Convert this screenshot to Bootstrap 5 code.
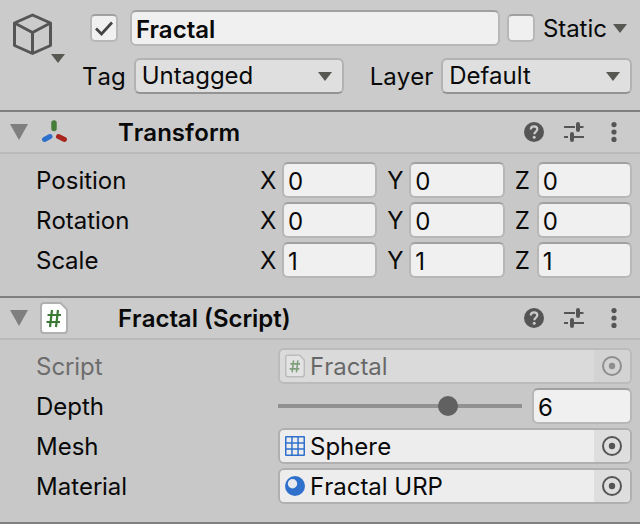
<!DOCTYPE html>
<html lang="en">
<head>
<meta charset="utf-8">
<meta name="viewport" content="width=device-width, initial-scale=1">
<title>Inspector</title>
<link href="https://cdn.jsdelivr.net/npm/bootstrap@5.3.0/dist/css/bootstrap.min.css" rel="stylesheet">
<style>
body { background: #c8c8c8; color: #090909; font-family: Inter, "Liberation Sans", sans-serif; font-size: 24px; line-height: 32px; font-kerning: none; }
.bare { border: 0; background: none; padding: 0; color: #555; }
.caret { width: 14px; height: 9px; fill: #585852; }

/* Object header */
.object-head, .component-head { background: #cbcbcb; }
.object-head { padding: 10px 8px 16px 12px; }
.object-icon { width: 78px; }
.object-icon .caret { margin: 0 0 -3px -2px; }
.head-main { min-width: 0; }
.line-row { height: 36px; }
.line-row label { padding-top: 2px; }
.object-name { width: auto; margin: 0 7px 0 12px; }
.static-name { margin: 0 6px 0 8px; }
.static-menu { margin-right: 5px; }
.tag-row { margin-top: 12px; margin-left: -8px; gap: 8px; }
.tag-pick { flex: 17 1 0; min-width: 0; margin-right: 18px; }
.layer-pick { flex: 15 1 0; min-width: 0; }

/* Controls */
.field { min-width: 0; height: 36px; padding: 2px 4px 0; color: #090909; background: #f0f0f0; border: 2px solid #b7b7b7; border-top-color: #a0a0a0; border-radius: 6px; font-size: 24px; line-height: 30px; }
.field:focus { background: #f0f0f0; box-shadow: none; border-color: #3a79bb; }
.pick { height: 36px; padding: 0 36px 0 6px; color: #090909; border: 2px solid #b2b2b2; border-bottom-color: #939393; border-radius: 6px; font-size: 24px; line-height: 32px;
  background: #dfdfdf url("data:image/svg+xml,%3Csvg xmlns='http://www.w3.org/2000/svg' viewBox='0 0 14 9' preserveAspectRatio='none'%3E%3Cpath d='M0 0h14L7 9z' fill='%23585852'/%3E%3C/svg%3E") no-repeat right 10px center / 14px 9px; }
.tick { width: 28px; height: 28px; margin: 0; border: 2px solid #b7b7b7; border-top-color: #a0a0a0; background-color: #f0f0f0; }
.tick.form-check-input[type=checkbox] { border-radius: 5px; }
.tick:checked { background-color: #f0f0f0; border-color: #a0a0a0 #b7b7b7 #b7b7b7; }
.tick:checked[type=checkbox] { background-size: 24px 24px; background-image: url("data:image/svg+xml,%3Csvg xmlns='http://www.w3.org/2000/svg' viewBox='0 0 24 24'%3E%3Cpath d='M4 12.5l5.500 5.500L20 6.500' fill='none' stroke='%23444' stroke-width='2.700'/%3E%3C/svg%3E"); }

/* Components */
.component { border-top: 2px solid #7f7f7f; }
.component-head { height: 42px; padding: 0 16px 0 10px; border-bottom: 2px solid #bababa; }
.component-head h2 { font-size: 24px; line-height: 32px; padding-top: 2px; }
.component-icon { width: 78px; margin-left: 12px; }
.component-body { padding: 8px 8px 18px 36px; }
.component-body > * + * { margin-top: 4px; }
.tools { gap: 20px; }
.axes { gap: 10px; }
.axis { display: flex; align-items: center; flex: 1 1 0; min-width: 0; }
.axis-name { flex: none; width: 22px; padding-top: 2px; }
.vector-name { width: 224px; padding-top: 2px; }
.prop-name { width: 242px; padding-top: 2px; }
.slot { height: 36px; background: #ededed; border: 2px solid #b0b0b0; border-radius: 6px; }
.slot-value { padding-left: 5px; gap: 5px; }
.slot-text { padding-top: 2px; }
.slot button { width: 36px; background: #dedede; }
.is-off .prop-name { color: #6d6d6d; }
.is-off .slot { opacity: .5; }
.depth { appearance: none; min-width: 0; height: 36px; margin: 0 10px 0 0; background: linear-gradient(#919191, #919191) no-repeat center / 100% 4px; }
.depth::-webkit-slider-thumb { appearance: none; width: 20px; height: 20px; border-radius: 50%; background: #616161; }
.depth::-moz-range-thumb { width: 20px; height: 20px; border: 0; border-radius: 50%; background: #616161; }
.depth-value { width: 100px; }
.end-line { border-top: 2px solid #7f7f7f; }
</style>
<script src="https://cdn.jsdelivr.net/npm/bootstrap@5.3.0/dist/js/bootstrap.bundle.min.js"></script>
</head>
<body>
<svg class="d-none" aria-hidden="true">
  <symbol id="help" viewBox="0 0 20 20"><circle cx="10" cy="10" r="10" fill="#555"/><path d="M6.800 7.600C6.800 5.500 8.100 4.300 10 4.300s3.300 1.100 3.300 2.900c0 2.300-3 2.500-3 5" fill="none" stroke="#cbcbcb" stroke-width="2.200"/><circle cx="10.200" cy="15.200" r="1.500" fill="#cbcbcb"/></symbol>
  <symbol id="preset" viewBox="0 0 20 20"><path d="M0 5h11M16 5h3.500M0 15h4M9 15h11" stroke="#555" stroke-width="2"/><path d="M14 2v6M8 12v6" stroke="#555" stroke-width="4" stroke-linecap="round"/></symbol>
  <symbol id="dots" viewBox="0 0 20 20"><g fill="#555"><circle cx="10" cy="2.600" r="2.600"/><circle cx="10" cy="10" r="2.600"/><circle cx="10" cy="17.400" r="2.600"/></g></symbol>
  <symbol id="fold" viewBox="0 0 18 16"><path d="M0 0h18L9 16z" fill="#7f7f7f"/></symbol>
  <symbol id="sheet" viewBox="0 0 28 32"><path d="M4 1h16.500L27 7.500V28a3 3 0 0 1-3 3H4a3 3 0 0 1-3-3V4a3 3 0 0 1 3-3z" fill="#fff" stroke="#b0b0b0" stroke-width="2"/><path d="M12 8l-2 17M18 8l-2 17M7.500 13h13.500M6.500 20H20" stroke="#3b7a35" stroke-width="2.200" fill="none"/></symbol>
  <symbol id="target" viewBox="0 0 20 20"><circle cx="10" cy="10" r="9" fill="none" stroke="#555" stroke-width="2"/><circle cx="10" cy="10" r="3.200" fill="#555"/></symbol>
</svg>

<header class="object-head d-flex">
  <div class="object-icon flex-shrink-0">
    <button class="bare d-flex align-items-end" aria-label="Object icon">
      <svg class="flex-shrink-0" width="41" height="50" viewBox="0 0 41 50" fill="none" stroke="#555" stroke-width="3" stroke-linejoin="round"><path d="M20.500 5L38.500 13v22.500L20.500 43.500 2.500 35.500V13zM2.500 13l18 9.500 18-9.500M20.500 22.500v21"/></svg>
      <svg class="caret" viewBox="0 0 14 9"><path d="M0 0h14L7 9z"/></svg>
    </button>
  </div>
  <div class="head-main flex-grow-1">
    <div class="line-row d-flex align-items-center">
      <input class="form-check-input tick flex-shrink-0" type="checkbox" checked aria-label="Active">
      <input class="form-control field fw-semibold flex-grow-1 object-name" type="text" value="Fractal" aria-label="Name">
      <input class="form-check-input tick flex-shrink-0" type="checkbox" id="static">
      <label for="static" class="static-name">Static</label>
      <button class="bare d-flex static-menu" aria-label="Static options"><svg class="caret" viewBox="0 0 14 9"><path d="M0 0h14L7 9z"/></svg></button>
    </div>
    <div class="line-row tag-row d-flex align-items-center">
      <label for="tag">Tag</label>
      <select class="form-select pick tag-pick" id="tag"><option>Untagged</option></select>
      <label for="layer">Layer</label>
      <select class="form-select pick layer-pick" id="layer"><option>Default</option></select>
    </div>
  </div>
</header>

<section class="component">
  <div class="component-head d-flex align-items-center">
    <button class="bare d-flex" aria-label="Collapse Transform"><svg width="18" height="16"><use href="#fold"/></svg></button>
    <span class="component-icon"><svg class="d-block" width="30" height="26" viewBox="0 0 30 26" fill="none" stroke-linecap="round" stroke-width="5"><path d="M14 4v5.500" stroke="#477d3b" stroke-width="5.500"/><path d="M4.500 20.500L10 17.500" stroke="#2f70cc"/><path d="M18.500 17.500l6 3" stroke="#a8261e"/></svg></span>
    <h2 class="fw-semibold mb-0 flex-grow-1">Transform</h2>
    <div class="d-flex tools">
      <button class="bare d-flex" aria-label="Help"><svg width="20" height="20"><use href="#help"/></svg></button>
      <button class="bare d-flex" aria-label="Presets"><svg width="20" height="20"><use href="#preset"/></svg></button>
      <button class="bare d-flex" aria-label="More"><svg width="20" height="20"><use href="#dots"/></svg></button>
    </div>
  </div>
  <div class="component-body">
    <div class="d-flex align-items-center">
      <span class="vector-name flex-shrink-0">Position</span>
      <div class="d-flex flex-grow-1 axes">
        <label class="axis"><span class="axis-name">X</span><input class="form-control field" value="0"></label>
        <label class="axis"><span class="axis-name">Y</span><input class="form-control field" value="0"></label>
        <label class="axis"><span class="axis-name">Z</span><input class="form-control field" value="0"></label>
      </div>
    </div>
    <div class="d-flex align-items-center">
      <span class="vector-name flex-shrink-0">Rotation</span>
      <div class="d-flex flex-grow-1 axes">
        <label class="axis"><span class="axis-name">X</span><input class="form-control field" value="0"></label>
        <label class="axis"><span class="axis-name">Y</span><input class="form-control field" value="0"></label>
        <label class="axis"><span class="axis-name">Z</span><input class="form-control field" value="0"></label>
      </div>
    </div>
    <div class="d-flex align-items-center">
      <span class="vector-name flex-shrink-0">Scale</span>
      <div class="d-flex flex-grow-1 axes">
        <label class="axis"><span class="axis-name">X</span><input class="form-control field" value="1"></label>
        <label class="axis"><span class="axis-name">Y</span><input class="form-control field" value="1"></label>
        <label class="axis"><span class="axis-name">Z</span><input class="form-control field" value="1"></label>
      </div>
    </div>
  </div>
</section>

<section class="component">
  <div class="component-head d-flex align-items-center">
    <button class="bare d-flex" aria-label="Collapse Fractal"><svg width="18" height="16"><use href="#fold"/></svg></button>
    <span class="component-icon"><svg class="d-block" width="28" height="32"><use href="#sheet"/></svg></span>
    <h2 class="fw-semibold mb-0 flex-grow-1">Fractal (Script)</h2>
    <div class="d-flex tools">
      <button class="bare d-flex" aria-label="Help"><svg width="20" height="20"><use href="#help"/></svg></button>
      <button class="bare d-flex" aria-label="Presets"><svg width="20" height="20"><use href="#preset"/></svg></button>
      <button class="bare d-flex" aria-label="More"><svg width="20" height="20"><use href="#dots"/></svg></button>
    </div>
  </div>
  <div class="component-body">
    <div class="d-flex align-items-center is-off">
      <span class="prop-name flex-shrink-0">Script</span>
      <div class="slot d-flex flex-grow-1 overflow-hidden">
        <span class="slot-value d-flex align-items-center flex-grow-1"><svg width="20" height="24"><use href="#sheet"/></svg><span class="slot-text">Fractal</span></span>
        <button class="bare d-flex align-items-center justify-content-center" disabled aria-label="Choose script"><svg width="20" height="20"><use href="#target"/></svg></button>
      </div>
    </div>
    <div class="d-flex align-items-center">
      <label class="prop-name flex-shrink-0" for="depth">Depth</label>
      <input class="depth flex-grow-1" type="range" id="depth" min="1" max="8" value="6">
      <input class="form-control field depth-value flex-shrink-0" value="6" aria-label="Depth value">
    </div>
    <div class="d-flex align-items-center">
      <span class="prop-name flex-shrink-0">Mesh</span>
      <div class="slot d-flex flex-grow-1 overflow-hidden">
        <span class="slot-value d-flex align-items-center flex-grow-1"><svg width="20" height="20" viewBox="0 0 20 20"><rect width="20" height="20" rx="1" fill="#2f70cc"/><path d="M1.500 1.500h4.700v4.700H1.500zM7.700 1.500h4.600v4.700H7.700zM13.800 1.500h4.700v4.700h-4.700zM1.500 7.700h4.700v4.600H1.500zM7.700 7.700h4.600v4.600H7.700zM13.800 7.700h4.700v4.600h-4.700zM1.500 13.800h4.700v4.700H1.500zM7.700 13.800h4.600v4.700H7.700zM13.800 13.800h4.700v4.700h-4.700z" fill="#ededed"/></svg><span class="slot-text">Sphere</span></span>
        <button class="bare d-flex align-items-center justify-content-center" aria-label="Choose mesh"><svg width="20" height="20"><use href="#target"/></svg></button>
      </div>
    </div>
    <div class="d-flex align-items-center">
      <span class="prop-name flex-shrink-0">Material</span>
      <div class="slot d-flex flex-grow-1 overflow-hidden">
        <span class="slot-value d-flex align-items-center flex-grow-1"><svg width="20" height="20" viewBox="0 0 20 20"><circle cx="10" cy="10" r="10" fill="#2f70cc"/><circle cx="7.500" cy="7.700" r="4.700" fill="#e6e9ed"/></svg><span class="slot-text">Fractal URP</span></span>
        <button class="bare d-flex align-items-center justify-content-center" aria-label="Choose material"><svg width="20" height="20"><use href="#target"/></svg></button>
      </div>
    </div>
  </div>
</section>
<hr class="m-0 opacity-100 end-line">
</body>
</html>
